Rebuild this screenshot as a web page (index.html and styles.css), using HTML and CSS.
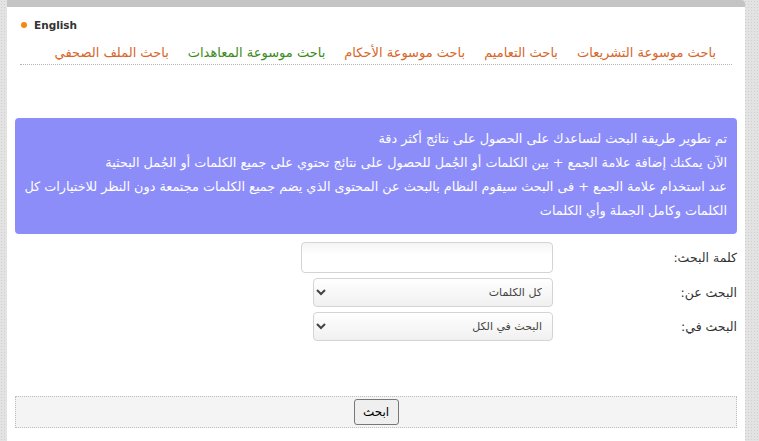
FILE: index.html
```html
<!DOCTYPE html>
<html lang="ar">
<head>
<meta charset="utf-8">
<title>البحث</title>
<link rel="stylesheet" href="styles.css">
</head>
<body>
<div class="page">
  <div class="lang"><span class="dot"></span><span class="lang-text">English</span></div>
  <nav class="nav" dir="rtl">
    <a href="#" class="nav-item">باحث موسوعة التشريعات</a>
    <a href="#" class="nav-item">باحث التعاميم</a>
    <a href="#" class="nav-item">باحث موسوعة الأحكام</a>
    <a href="#" class="nav-item active">باحث موسوعة المعاهدات</a>
    <a href="#" class="nav-item">باحث الملف الصحفي</a>
  </nav>
  <div class="notice" dir="rtl">
    تم تطوير طريقة البحث لتساعدك على الحصول على نتائج أكثر دقة<br>
    الآن يمكنك إضافة علامة الجمع + بين الكلمات أو الجُمل للحصول على نتائج تحتوي على جميع الكلمات أو الجُمل البحثية<br>
    عند استخدام علامة الجمع + فى البحث سيقوم النظام بالبحث عن المحتوى الذي يضم جميع الكلمات مجتمعة دون النظر للاختيارات كل الكلمات وكامل الجملة وأي الكلمات
  </div>
  <form class="form" dir="rtl">
    <div class="row">
      <label class="label">كلمة البحث:</label>
      <div class="field"><input class="text-input" type="text"></div>
    </div>
    <div class="row">
      <label class="label">البحث عن:</label>
      <div class="field"><select class="select"><option>كل الكلمات</option></select></div>
    </div>
    <div class="row">
      <label class="label">البحث في:</label>
      <div class="field"><select class="select"><option>البحث في الكل</option></select></div>
    </div>
    <div class="actions">
      <button type="button" class="btn">ابحث</button>
    </div>
  </form>
</div>
</body>
</html>
```
FILE: styles.css
```css
html, body {
  margin: 0;
  padding: 0;
  height: 100%;
}
body {
  background-color: #e3e3e3;
  background-image: radial-gradient(#cfcfcf 0.7px, transparent 1px);
  background-size: 3px 3px;
  font-family: Tahoma, "DejaVu Sans", sans-serif;
  overflow: hidden;
}
.page {
  margin-left: 7px;
  width: 738px;
  min-height: 434px;
  background: #fff;
  border-top: 7px solid #c4c4c4;
  border-top-right-radius: 4px;
}
.lang {
  display: flex;
  align-items: center;
  padding: 11px 0 0 14px;
  height: 14px;
}
.dot {
  width: 6px;
  height: 6px;
  border-radius: 50%;
  background: #f7880f;
  margin-right: 7px;
}
.lang-text {
  font-family: "DejaVu Sans", sans-serif;
  font-weight: bold;
  font-size: 10.5px;
  color: #333;
}
.nav {
  display: flex;
  gap: 19px;
  margin: 12px 13px 0 13px;
  padding: 0 16px 2px 0;
  height: 18px;
  line-height: 18px;
  border-bottom: 1px dotted #b5b5b5;
  font-size: 13px;
}
.nav-item {
  color: #d8662a;
  text-decoration: none;
  white-space: nowrap;
}
.nav-item.active {
  color: #3b8c1c;
}
.notice {
  margin: 53px 8px 0 8px;
  background: #8d8df9;
  border-radius: 4px;
  padding: 9px 10px 11px 4px;
  color: #fff;
  font-size: 12.8px;
  line-height: 24px;
}
.form {
  margin: 8px 8px 0 8px;
}
.row {
  display: flex;
  align-items: center;
  margin-bottom: 5px;
}
.label {
  width: 184px;
  font-size: 12.5px;
  color: #333;
}
.field {
  display: flex;
}
.text-input {
  width: 252px;
  height: 31px;
  box-sizing: border-box;
  border: 1px solid #d4d4d4;
  border-radius: 4px;
  background: linear-gradient(#f4f4f4, #fff 40%);
}
.select {
  width: 240px;
  height: 29px;
  box-sizing: border-box;
  border: 1px solid #d4d4d4;
  border-radius: 4px;
  background: linear-gradient(#fff, #f0f0f0);
  font-family: Tahoma, "DejaVu Sans", sans-serif;
  font-size: 11px;
  color: #444;
  padding-right: 6px;
}
.actions {
  margin-top: 55px;
  display: flex;
  justify-content: center;
  border: 1px dotted #bdbdbd;
  background: #f4f4f4;
  padding: 2px 0;
  height: 26px;
}
.btn {
  width: 45px;
  height: 26px;
  border: 1px solid #777;
  border-radius: 3px;
  background: #efefef;
  font-family: Tahoma, "DejaVu Sans", sans-serif;
  font-size: 12px;
  color: #000;
  padding: 0;
}
```
